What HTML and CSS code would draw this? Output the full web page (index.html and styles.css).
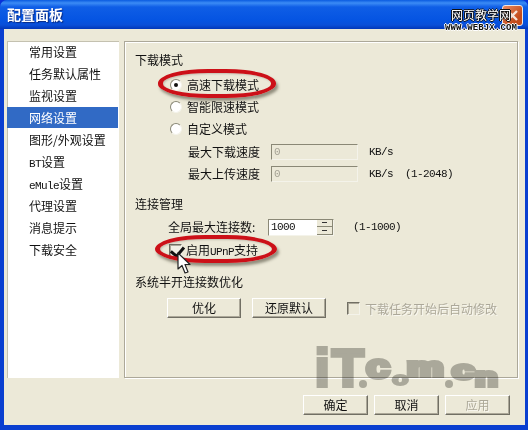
FILE: index.html
```html
<!DOCTYPE html>
<html lang="zh-CN">
<head>
    <meta charset="UTF-8">
    <title>配置面板</title>
    <link rel="stylesheet" href="styles.css">
</head>
<body>
    <div class="window">
        <div class="titlebar">
            <span class="title-text">配置面板</span>
            <span class="close-button">
                <svg width="19" height="19" viewBox="0 0 19 19">
                    <path d="M5 5 L14 14 M14 5 L5 14" stroke="#f6e2d8" stroke-width="2.4" fill="none"/>
                </svg>
            </span>
        </div>

        <div class="client">
            <div class="main-row">
                <ul class="nav-list">
                    <li>常用设置</li>
                    <li>任务默认属性</li>
                    <li>监视设置</li>
                    <li class="selected">网络设置</li>
                    <li>图形/外观设置</li>
                    <li><span class="latin">BT</span>设置</li>
                    <li><span class="latin">eMule</span>设置</li>
                    <li>代理设置</li>
                    <li>消息提示</li>
                    <li>下载安全</li>
                </ul>

                <div class="panel">
                    <div class="row">下载模式</div>
                    <div class="radio-group">
                        <div class="row option"><span class="radio checked"></span>高速下载模式</div>
                        <div class="row option"><span class="radio"></span>智能限速模式</div>
                        <div class="row option"><span class="radio"></span>自定义模式</div>
                    </div>
                    <div class="speed-group">
                        <div class="row speed-row">
                            <span class="speed-label">最大下载速度</span>
                            <span class="text-box disabled latin">0</span>
                            <span class="unit latin">KB/s</span>
                        </div>
                        <div class="row speed-row">
                            <span class="speed-label">最大上传速度</span>
                            <span class="text-box disabled latin">0</span>
                            <span class="unit latin">KB/s</span>
                            <span class="range latin">(1-2048)</span>
                        </div>
                    </div>

                    <div class="row section-two">连接管理</div>
                    <div class="row conn-row">
                        <span class="conn-label">全局最大连接数:</span>
                        <span class="spin-box">
                            <span class="latin">1000</span>
                            <span class="spin-arrows">
                                <span class="spin-btn"><i class="arrow-up"></i></span>
                                <span class="spin-btn"><i class="arrow-down"></i></span>
                            </span>
                        </span>
                        <span class="conn-range latin">(1-1000)</span>
                    </div>
                    <div class="row option upnp-row">
                        <span class="checkbox checked"></span>
                        <span>启用<span class="latin">UPnP</span>支持</span>
                    </div>

                    <div class="row section-three">系统半开连接数优化</div>
                    <div class="optimize-row">
                        <button class="win-button">优化</button>
                        <button class="win-button">还原默认</button>
                        <span class="checkbox disabled"></span>
                        <span class="disabled-text">下载任务开始后自动修改</span>
                    </div>
                </div>
            </div>

            <div class="footer-row">
                <button class="win-button footer-button">确定</button>
                <button class="win-button footer-button">取消</button>
                <button class="win-button footer-button off">应用</button>
            </div>
        </div>

        <!-- annotations and watermarks pasted over the screenshot -->
        <div class="ring ring-one"></div>
        <div class="ring ring-two"></div>
        <svg class="cursor" width="14" height="23" viewBox="0 0 14 23">
            <path d="M1 1 L1 17 L5 13.5 L8 21 L11 20 L8 12.5 L13 12.5 Z" fill="#fff" stroke="#222" stroke-width="1.2" stroke-linejoin="round"/>
        </svg>
        <div class="mark-top">
            <div class="mark-cn">网页教学网</div>
            <div class="mark-url">WWW.WEBJX.COM</div>
        </div>
        <div class="mark-logo">
            <span class="lt lt-i">i</span>
            <span class="lt lt-t">T</span>
            <span class="logo-dot dot-one"></span>
            <span class="lt lt-c1">c</span>
            <span class="lt lt-o">o</span>
            <span class="lt lt-m">m</span>
            <span class="logo-dot dot-two"></span>
            <span class="lt lt-c2">c</span>
            <span class="lt lt-n">n</span>
        </div>
    </div>
</body>
</html>
```

FILE: styles.css
```css
/* General Styles */
* {
    box-sizing: border-box;
}
html, body {
    margin: 0;
    padding: 0;
}
body {
    width: 528px;
    height: 430px;
    overflow: hidden;
    font-family: "Noto Sans CJK SC", "Liberation Sans", sans-serif;
    font-size: 12px;
    color: #111;
    background: #0831d9;
}
.latin {
    font-family: "Liberation Mono", monospace;
    font-size: 11px;
    letter-spacing: -0.6px;
}

/* Window Frame */
.window {
    position: relative;
    width: 528px;
    height: 430px;
    display: flex;
    flex-direction: column;
    background: #0a3fd0;
    border-radius: 7px 7px 0 0;
    overflow: hidden;
}
.titlebar {
    height: 29px;
    flex: none;
    display: flex;
    align-items: center;
    justify-content: space-between;
    padding: 0 5px 0 7px;
    background: linear-gradient(to bottom, #0a5be0 0, #3c8cf5 3px, #0f5ee6 7px, #0554e2 20px, #0a4fd8 25px, #0237b8 29px);
}
.title-text {
    margin-bottom: 2px;
    color: #fff;
    font-size: 14px;
    font-weight: 700;
    text-shadow: 1px 1px 1px #0a2a80;
}
.close-button {
    width: 21px;
    height: 21px;
    margin-top: 1px;
    border: 1px solid #f0e6e0;
    border-radius: 3px;
    background: linear-gradient(135deg, #e88a60, #c44c1c 70%);
}
.close-button svg {
    display: block;
}
.client {
    flex: 1;
    margin: 0 3px 5px 4px;
    padding: 12px 7px 0 3px;
    background: #ece9d8;
    display: flex;
    flex-direction: column;
}
.main-row {
    height: 337px;
    display: flex;
    gap: 5px;
}

/* Left List */
.nav-list {
    width: 112px;
    margin: 0;
    padding: 0;
    list-style: none;
    background: #fff;
    box-shadow: inset 1px 1px 0 #c4c1b0;
}
.nav-list li {
    height: 22px;
    line-height: 21px;
    padding-left: 22px;
}
.nav-list li.selected {
    height: 21px;
    margin: 0 1px 1px 0;
    background: #316ac5;
    color: #fff;
}

/* Settings Panel */
.panel {
    flex: 1;
    padding: 6px 0 0 10px;
    border: 1px solid #aca899;
    box-shadow: inset 1px 1px 0 #fff, 1px 1px 0 #fff;
}
.row {
    height: 22px;
    display: flex;
    align-items: center;
}
.radio-group {
    margin-top: 3px;
}
.option {
    padding-left: 35px;
}
.radio {
    position: relative;
    width: 12px;
    height: 12px;
    margin: 2px 5px 0 0;
    border-radius: 50%;
    background: #fff;
    border: 1px solid;
    border-color: #8a8876 #f4f3ea #f4f3ea #8a8876;
}
.radio.checked::after {
    content: "";
    position: absolute;
    left: 3px;
    top: 3px;
    width: 4px;
    height: 4px;
    border-radius: 50%;
    background: #111;
}
.speed-group {
    margin-top: 1px;
}
.speed-row {
    padding-left: 53px;
}
.speed-label {
    width: 83px;
}
.text-box {
    width: 87px;
    height: 16px;
    margin-top: 2px;
    line-height: 14px;
    padding-left: 2px;
    border: 1px solid;
    border-color: #8a8876 #f4f3ea #f4f3ea #8a8876;
}
.text-box.disabled {
    color: #a5a294;
    background: #ece9d8;
}
.unit {
    margin: 2px 0 0 11px;
}
.range {
    margin: 2px 0 0 12px;
}
.section-two {
    margin-top: 8px;
}
.conn-row {
    margin-top: 1px;
    padding-left: 33px;
}
.conn-label {
    width: 100px;
}
.spin-box {
    width: 66px;
    height: 17px;
    margin-top: 2px;
    padding-left: 2px;
    display: flex;
    align-items: center;
    justify-content: space-between;
    background: #fff;
    border: 1px solid;
    border-color: #8a8876 #f4f3ea #f4f3ea #8a8876;
}
.spin-arrows {
    width: 16px;
    height: 15px;
    display: flex;
    flex-direction: column;
}
.spin-btn {
    flex: 1;
    display: flex;
    align-items: center;
    justify-content: center;
    background: #ece9d8;
    border-right: 1px solid #8a8876;
    border-bottom: 1px solid #8a8876;
}
.arrow-up, .arrow-down {
    width: 5px;
    height: 1px;
    background: #333;
}
.conn-range {
    margin: 2px 0 0 19px;
}
.upnp-row {
    margin-top: 1px;
    padding-left: 34px;
}
.checkbox {
    width: 13px;
    height: 13px;
    margin: 2px 4px 0 0;
    flex: none;
    background: #fff;
    border: 1px solid;
    border-color: #716f64 #f4f3ea #f4f3ea #716f64;
    box-shadow: inset 1px 1px 0 #aca899;
}
.checkbox.checked {
    position: relative;
    background: #f1efe4;
}
.checkbox.checked::after {
    content: "";
    position: absolute;
    left: 3px;
    top: -1px;
    width: 6px;
    height: 10px;
    border: solid #111;
    border-width: 0 3px 3px 0;
    transform: rotate(40deg);
}
.section-three {
    margin-top: 10px;
}

/* Buttons */
.optimize-row {
    margin-top: 6px;
    padding-left: 32px;
    height: 20px;
    display: flex;
    align-items: center;
    gap: 11px;
}
.optimize-row .checkbox.disabled {
    margin: 0 -6px 0 10px;
    background: #ece9d8;
}
.win-button {
    width: 74px;
    height: 20px;
    padding: 0 0 2px;
    font-family: inherit;
    font-size: 12px;
    color: #111;
    background: #ece9d8;
    border: 1px solid;
    border-color: #fff #716f64 #716f64 #fff;
    box-shadow: inset -1px -1px 0 #aca899;
}
.disabled-text {
    color: #aca899;
    text-shadow: 1px 1px 0 #f8f7f0;
}
.footer-row {
    margin-top: 17px;
    padding-right: 8px;
    display: flex;
    justify-content: flex-end;
    gap: 6px;
}
.footer-button {
    width: 65px;
}
.footer-button.off {
    color: #aca899;
    text-shadow: 1px 1px 0 #f8f7f0;
}

/* Overlays */
.ring {
    position: absolute;
    border: solid #cc1018;
    border-width: 4px 5px;
    border-radius: 50px / 14px;
    box-shadow: 2px 3px 3px rgba(70, 65, 50, 0.55), inset 1px 1px 2px rgba(70, 65, 50, 0.25);
}
.ring-one {
    left: 158px;
    top: 69px;
    width: 118px;
    height: 29px;
}
.ring-two {
    left: 155px;
    top: 235px;
    width: 122px;
    height: 28px;
}
.cursor {
    position: absolute;
    left: 177px;
    top: 252px;
}
.mark-top {
    position: absolute;
    left: 445px;
    top: 7px;
    width: 72px;
    text-align: center;
}
.mark-cn {
    height: 17px;
    line-height: 16px;
    font-size: 12px;
    color: #fff;
    text-shadow: 1px 0 0 #111, -1px 0 0 #111, 0 1px 0 #111, 0 -1px 0 #111;
}
.mark-url {
    height: 8px;
    line-height: 8px;
    font-family: "Liberation Mono", monospace;
    font-size: 9px;
    font-weight: 700;
    letter-spacing: 0.14px;
    color: #111;
    text-shadow: 1px 0 0 #fff, -1px 0 0 #fff, 0 1px 0 #fff, 0 -1px 0 #fff;
}
.mark-logo {
    position: absolute;
    left: 312px;
    top: 338px;
    width: 192px;
    height: 60px;
    font-family: "Liberation Sans", sans-serif;
    font-weight: 700;
    color: #b8b8b6;
    mix-blend-mode: multiply;
    filter: blur(0.4px);
}
.lt {
    position: absolute;
    -webkit-text-stroke: 4px #b8b8b6;
    transform-origin: left center;
}
.logo-dot {
    position: absolute;
    top: 42px;
    width: 8px;
    height: 8px;
    border-radius: 50%;
    background: #b8b8b6;
}
.dot-one { left: 47px; }
.dot-two { left: 133px; }
.lt-i { left: 3px; top: 9px; font-size: 52px; line-height: 42px; }
.lt-t { left: 20px; top: 9px; font-size: 52px; line-height: 42px; }
.lt-c1 { left: 54px; top: 18px; font-size: 33px; line-height: 21px; transform: scaleX(1.3); }
.lt-o { left: 80px; top: 36px; font-size: 18px; line-height: 11px; -webkit-text-stroke-width: 2px; transform: scaleX(1.5); }
.lt-m { left: 95px; top: 21px; font-size: 26px; line-height: 17px; transform: scaleX(1.58); }
.lt-c2 { left: 140px; top: 24px; font-size: 26px; line-height: 17px; transform: scaleX(1.54); }
.lt-n { left: 163px; top: 31px; font-size: 26px; line-height: 17px; transform: scaleX(1.43); }
```
